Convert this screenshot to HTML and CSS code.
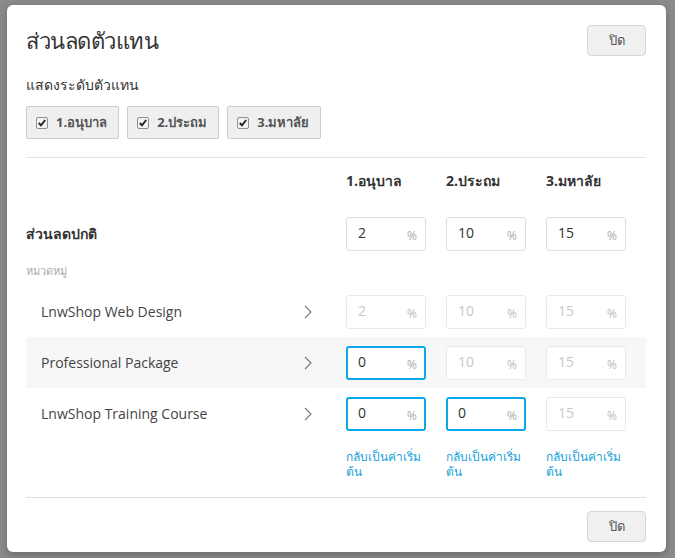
FILE: index.html
```html
<!DOCTYPE html>
<html>
<head>
    <title>ส่วนลดตัวแทน</title>
    <link rel="stylesheet" href="styles.css">
</head>
<body>

    <div class="modal">
        <div class="modal-head">
            <h2>ส่วนลดตัวแทน</h2>
            <button class="btn">ปิด</button>
        </div>

        <div class="show-label">แสดงระดับตัวแทน</div>
        <div class="levels">
            <label class="level"><svg class="check" viewBox="0 0 12 12"><rect x="0.5" y="0.5" width="11" height="11" rx="1.5" fill="#f2f2f2" stroke="#8f8f8f"/><path d="M2.8 6 L5 8.4 L9.2 3" fill="none" stroke="#222" stroke-width="1.9"/></svg>1.อนุบาล</label>
            <label class="level"><svg class="check" viewBox="0 0 12 12"><rect x="0.5" y="0.5" width="11" height="11" rx="1.5" fill="#f2f2f2" stroke="#8f8f8f"/><path d="M2.8 6 L5 8.4 L9.2 3" fill="none" stroke="#222" stroke-width="1.9"/></svg>2.ประถม</label>
            <label class="level"><svg class="check" viewBox="0 0 12 12"><rect x="0.5" y="0.5" width="11" height="11" rx="1.5" fill="#f2f2f2" stroke="#8f8f8f"/><path d="M2.8 6 L5 8.4 L9.2 3" fill="none" stroke="#222" stroke-width="1.9"/></svg>3.มหาลัย</label>
        </div>

        <div class="table">
            <div class="row head-row">
                <div class="name"></div>
                <div class="cell">1.อนุบาล</div>
                <div class="cell">2.ประถม</div>
                <div class="cell">3.มหาลัย</div>
            </div>

            <div class="row main-row">
                <div class="name">ส่วนลดปกติ</div>
                <div class="cell"><div class="pct"><span>2</span><i>%</i></div></div>
                <div class="cell"><div class="pct"><span>10</span><i>%</i></div></div>
                <div class="cell"><div class="pct"><span>15</span><i>%</i></div></div>
            </div>

            <div class="group-label">หมวดหมู่</div>

            <div class="row cat-row">
                <div class="name">LnwShop Web Design <svg class="chev" viewBox="0 0 8 14"><path d="M1 1 L7 7 L1 13" fill="none" stroke="#777" stroke-width="1.1"/></svg></div>
                <div class="cell"><div class="pct off"><span>2</span><i>%</i></div></div>
                <div class="cell"><div class="pct off"><span>10</span><i>%</i></div></div>
                <div class="cell"><div class="pct off"><span>15</span><i>%</i></div></div>
            </div>

            <div class="row cat-row shade">
                <div class="name">Professional Package <svg class="chev" viewBox="0 0 8 14"><path d="M1 1 L7 7 L1 13" fill="none" stroke="#777" stroke-width="1.1"/></svg></div>
                <div class="cell"><div class="pct on"><span>0</span><i>%</i></div></div>
                <div class="cell"><div class="pct off"><span>10</span><i>%</i></div></div>
                <div class="cell"><div class="pct off"><span>15</span><i>%</i></div></div>
            </div>

            <div class="row cat-row">
                <div class="name">LnwShop Training Course <svg class="chev" viewBox="0 0 8 14"><path d="M1 1 L7 7 L1 13" fill="none" stroke="#777" stroke-width="1.1"/></svg></div>
                <div class="cell"><div class="pct on"><span>0</span><i>%</i></div></div>
                <div class="cell"><div class="pct on"><span>0</span><i>%</i></div></div>
                <div class="cell"><div class="pct off"><span>15</span><i>%</i></div></div>
            </div>

            <div class="row reset-row">
                <div class="name"></div>
                <div class="cell"><a href="#">กลับเป็นค่าเริ่มต้น</a></div>
                <div class="cell"><a href="#">กลับเป็นค่าเริ่มต้น</a></div>
                <div class="cell"><a href="#">กลับเป็นค่าเริ่มต้น</a></div>
            </div>
        </div>

        <div class="modal-foot">
            <button class="btn">ปิด</button>
        </div>
    </div>

</body>
</html>
```

FILE: styles.css
```css
body {
    font-family: 'Open Sans', 'Noto Sans', sans-serif;
    background-color: #8b8b8b;
    margin: 0;
    color: #333;
    height: 558px;
    overflow: hidden;
}

.modal {
    margin: 5px 0 0 7px;
    width: 659px;
    height: 547px;
    box-sizing: border-box;
    background-color: #fff;
    border-radius: 6px;
    box-shadow: 0 3px 8px rgba(0, 0, 0, 0.25);
    padding: 20px 20px 0 19px;
}

.modal-head {
    display: flex;
    justify-content: space-between;
    align-items: center;
    height: 31px;
}

.modal-head h2 {
    margin: 0;
    font-size: 22px;
    line-height: 31px;
    font-weight: 400;
    color: #333;
    letter-spacing: -0.5px;
}

.btn {
    width: 59px;
    height: 31px;
    background-color: #f0f0f0;
    border: 1px solid #d6d6d6;
    border-radius: 4px;
    font-family: inherit;
    font-size: 13px;
    color: #555;
    padding: 0;
}

.show-label {
    margin-top: 19px;
    font-size: 14px;
    line-height: 20px;
}

.levels {
    display: flex;
    gap: 8px;
    margin-top: 11px;
    padding-bottom: 18px;
    border-bottom: 1px solid #dbe6e8;
}

.level {
    display: flex;
    align-items: center;
    gap: 8px;
    height: 33px;
    box-sizing: border-box;
    padding: 0 11px 0 9px;
    background-color: #efefef;
    border: 1px solid #cdcdcd;
    border-radius: 2px;
    font-size: 13px;
    font-weight: 700;
    color: #555;
}

.check {
    width: 12px;
    height: 12px;
}

.row {
    display: grid;
    grid-template-columns: 320px 100px 100px 100px;
    align-items: center;
}

.head-row {
    height: 46px;
    font-size: 14px;
    font-weight: 700;
    color: #333;
}

.main-row {
    height: 60px;
}

.main-row .name {
    font-size: 14px;
    font-weight: 700;
}

.group-label {
    font-size: 11px;
    color: #aaa;
    height: 22px;
    line-height: 14px;
}

.cat-row {
    height: 51px;
}

.cat-row .name {
    display: flex;
    justify-content: space-between;
    align-items: center;
    padding: 0 34px 0 15px;
    font-size: 14px;
    color: #444;
}

.shade {
    background-color: #f7f7f7;
}

.chev {
    width: 8px;
    height: 14px;
}

.pct {
    width: 80px;
    height: 34px;
    box-sizing: border-box;
    display: flex;
    justify-content: space-between;
    align-items: center;
    padding: 0 8px 0 11px;
    background-color: #fff;
    border: 1px solid #dde1e4;
    border-radius: 3px;
    font-size: 14px;
    color: #333;
}

.pct span {
    margin-top: -3px;
}

.pct i {
    font-style: normal;
    font-size: 12px;
    color: #aaa;
    margin-top: 3px;
}

.pct.off {
    border-color: #e6e8ea;
    color: #c8c8c8;
}

.pct.off i {
    color: #bbb;
}

.pct.on {
    border: 2px solid #0ba8ec;
    padding: 0 7px 0 10px;
}

.reset-row {
    align-items: start;
    padding-top: 10px;
}

.reset-row a {
    display: block;
    width: 80px;
    font-size: 12px;
    line-height: 15px;
    color: #1a9fd9;
    text-decoration: none;
}

.modal-foot {
    margin-top: 18px;
    border-top: 1px solid #dfe3e5;
    padding-top: 13px;
    display: flex;
    justify-content: flex-end;
}
```
